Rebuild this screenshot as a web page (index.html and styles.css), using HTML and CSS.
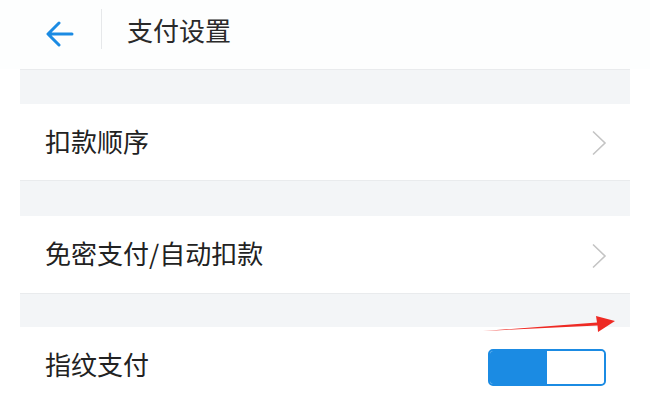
FILE: index.html
```html
<!DOCTYPE html>
<html lang="zh-CN">
<head>
<meta charset="utf-8">
<link rel="stylesheet" href="styles.css">
</head>
<body>
<div class="page">
  <header class="header">
    <span class="back">
      <svg width="28" height="26" viewBox="0 0 28 26"><path d="M26 13H3M13 2L2 13L13 24" fill="none" stroke="#1b8be3" stroke-width="3" stroke-linecap="round" stroke-linejoin="round"/></svg>
    </span>
    <span class="divider"></span>
    <h1 class="title">支付设置</h1>
  </header>
  <main class="list">
    <div class="band"></div>
    <div class="row"><span class="label">扣款顺序</span>
      <svg class="chev" width="16" height="26" viewBox="0 0 16 26"><path d="M2 1.5L14 13L2 24.5" fill="none" stroke="#c4c4c4" stroke-width="1.6"/></svg>
    </div>
    <div class="band b2"></div>
    <div class="row r2"><span class="label">免密支付/自动扣款</span>
      <svg class="chev" width="16" height="26" viewBox="0 0 16 26"><path d="M2 1.5L14 13L2 24.5" fill="none" stroke="#c4c4c4" stroke-width="1.6"/></svg>
    </div>
    <div class="band b3"></div>
    <div class="row r3"><span class="label">指纹支付</span>
      <span class="toggle"><span class="on"></span><span class="knob"></span></span>
    </div>
  </main>
  <svg class="annot" width="140" height="24" viewBox="0 0 140 24"><path d="M0 17L114 8.5L113 2L132 7L115 18L114.5 11.5Z" fill="#ee2a24"/></svg>
</div>
</body>
</html>
```
FILE: styles.css
```css
html, body { margin: 0; padding: 0; background: #fff; }
.page {
  position: relative;
  width: 650px;
  height: 401px;
  overflow: hidden;
  font-family: "Noto Sans CJK SC", "Noto Sans", sans-serif;
  color: #222;
}
.header {
  height: 69px;
  display: flex;
  align-items: center;
  background: #fdfefe;
}
.back {
  display: flex;
  margin-left: 46px;
  width: 28px;
  height: 26px;
  margin-top: -2px;
}
.divider {
  width: 1px;
  height: 40px;
  background: #e6e8ea;
  margin-left: 27px;
  margin-top: -11px;
}
.title {
  margin: -10px 0 0 25px;
  font-size: 26px;
  font-weight: 400;
  line-height: 1;
  color: #2a2a2a;
}
.list {
  margin: 0 20px;
}
.band {
  height: 35px;
  background: #f3f5f7;
  border-top: 1px solid #e9ebed;
  box-sizing: border-box;
}
.b2 { height: 36px; }
.b3 { height: 34px; }
.row {
  height: 76px;
  display: flex;
  align-items: center;
  justify-content: space-between;
  padding: 0 23px 0 25px;
  background: #fff;
}
.r2 { height: 77px; }
.r3 { height: 77px; padding-right: 24px; }
.label {
  font-size: 26px;
  line-height: 1;
  margin-top: -3px;
}
.chev { margin-top: 2px; }
.toggle {
  display: flex;
  width: 118px;
  height: 37px;
  box-sizing: border-box;
  border: 2px solid #1b8be3;
  border-radius: 5px;
  overflow: hidden;
  margin-top: 3px;
}
.on { width: 57px; background: #1b8be3; }
.knob { flex: 1; background: #fff; border-radius: 4px; }
.annot {
  position: absolute;
  left: 483px;
  top: 314px;
}
```
